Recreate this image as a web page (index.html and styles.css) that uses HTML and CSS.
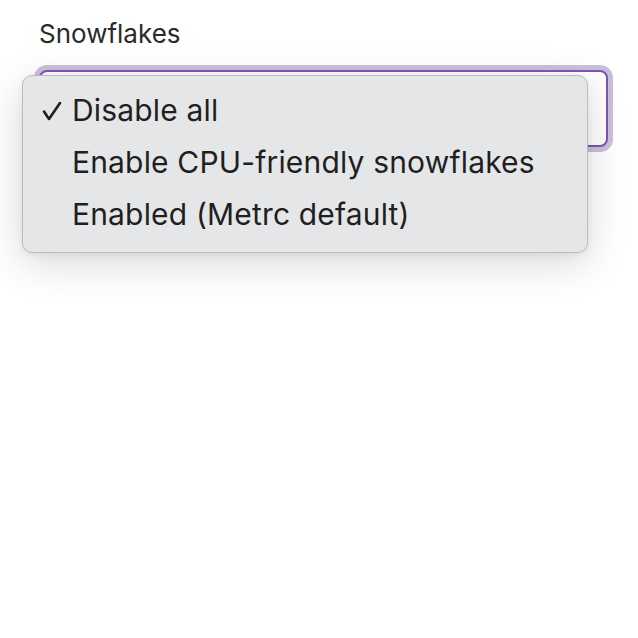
FILE: index.html
```html
<!DOCTYPE html>
<html>
<head>
<meta charset="utf-8">
<link rel="stylesheet" href="styles.css">
</head>
<body>
<div class="field">
  <div class="label">Snowflakes</div>
  <div class="select-wrap">
    <div class="select"></div>
    <div class="menu">
      <div class="option"><span class="check"><svg width="20" height="20" viewBox="0 0 20 20"><path d="M2 10.5 L7 18 L18 2" fill="none" stroke="#1f1f1f" stroke-width="2.6" stroke-linecap="round" stroke-linejoin="round"/></svg></span>Disable all</div>
      <div class="option"><span class="check"></span>Enable CPU-friendly snowflakes</div>
      <div class="option"><span class="check"></span>Enabled (Metrc default)</div>
    </div>
  </div>
</div>
</body>
</html>
```
FILE: styles.css
```css
html, body {
  margin: 0;
  padding: 0;
  background: #ffffff;
}
body {
  min-height: 638px;
  font-family: Inter, "Liberation Sans", Arial, sans-serif;
  color: #222222;
}
.field {
  padding: 19px 30px 0 39px;
}
.label {
  font-size: 26px;
  line-height: 30px;
  color: #2a2a2a;
}
.select-wrap {
  position: relative;
  margin-top: 21px;
}
.select {
  height: 73px;
  border: 2px solid #7d55b4;
  border-radius: 8px;
  box-shadow: 0 0 0 5px #cbc0da;
  background: #fff;
}
.menu {
  position: absolute;
  left: -17px;
  top: 5px;
  width: 566px;
  box-sizing: border-box;
  padding: 8px 0 12px 0;
  background: #e5e6e8;
  border: 1px solid #bcbcbe;
  border-radius: 10px;
  box-shadow: 0 10px 40px rgba(0,0,0,0.16), 0 2px 6px rgba(0,0,0,0.06);
}
.option {
  display: flex;
  align-items: center;
  height: 52px;
  font-size: 30px;
  letter-spacing: 0.17px;
  color: #1f1f1f;
}
.check {
  width: 49px;
  flex: none;
  box-sizing: border-box;
  padding-left: 19px;
  display: flex;
  align-items: center;
  padding-top: 2px;
}
```
